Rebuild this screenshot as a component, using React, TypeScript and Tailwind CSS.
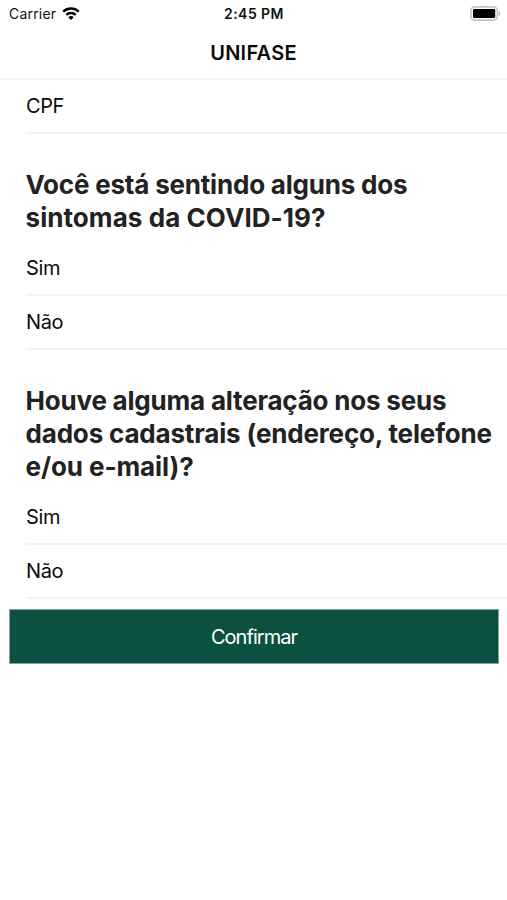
import type { ReactNode } from 'react'

type Question = {
  id: string
  lines: { text: string; tracking: string }[]
  options: string[]
}

const QUESTIONS: Question[] = [
  {
    id: 'symptoms',
    lines: [
      { text: 'Você está sentindo alguns dos', tracking: 'tracking-[-0.2px]' },
      { text: 'sintomas da COVID-19?', tracking: 'tracking-[0.07px]' },
    ],
    options: ['Sim', 'Não'],
  },
  {
    id: 'registration',
    lines: [
      { text: 'Houve alguma alteração nos seus', tracking: 'tracking-[-0.2px]' },
      { text: 'dados cadastrais (endereço, telefone', tracking: 'tracking-[-0.17px]' },
      { text: 'e/ou e-mail)?', tracking: 'tracking-[-0.08px]' },
    ],
    options: ['Sim', 'Não'],
  },
]

function WifiIcon() {
  return (
    <svg width="18" height="14" viewBox="0 0 19 15" fill="none" stroke="#000" strokeWidth="2.6">
      <path d="M1.2 5a12 12 0 0 1 16.6 0" />
      <path d="M4.4 8.4a7.4 7.4 0 0 1 10.2 0" />
      <path d="M9.5 14L6.6 11a4.2 4.2 0 0 1 5.8 0z" fill="#000" stroke="none" />
    </svg>
  )
}

function BatteryIcon() {
  return (
    <svg width="31" height="15" viewBox="0 0 31 15" fill="none">
      <rect x="0.9" y="0.9" width="26.4" height="13.2" rx="3.6" stroke="#c4c4c4" strokeWidth="1.6" />
      <rect x="3" y="3" width="22.2" height="9" rx="1.2" fill="#000" />
      <path d="M28.6 5c2.2.8 2.2 4.2 0 5z" fill="#b4b4b4" />
    </svg>
  )
}

function StatusBar() {
  return (
    <div className="grid grid-cols-3 items-center h-[27px] pl-[9px] pr-[6px] text-[#111]">
      <div className="flex items-center gap-1.5">
        <span className="text-[14px] tracking-[0.2px]">Carrier</span>
        <WifiIcon />
      </div>
      <span className="-ml-[2px] text-center text-[14px] font-semibold tracking-[0.45px]">2:45 PM</span>
      <div className="flex justify-end">
        <BatteryIcon />
      </div>
    </div>
  )
}

function Row({ children }: { children: ReactNode }) {
  return (
    <div className="ml-[26px] h-[54px] flex items-center border-b-2 border-[#f2f2f2] text-[20px] tracking-[-0.4px] text-[#0a0a0a]">
      {children}
    </div>
  )
}

export default function App() {
  return (
    <div className="min-h-screen bg-white font-['Inter','Liberation_Sans',sans-serif]">
      <StatusBar />
      <header className="h-[53px] flex items-center justify-center border-b-2 border-[#f4f4f4]">
        <h1 className="text-[20px] font-semibold tracking-[0.25px] text-[#0a0a0a]">UNIFASE</h1>
      </header>

      <main>
        <Row>CPF</Row>
        {QUESTIONS.map((q) => (
          <section key={q.id}>
            <h2 className="pt-[34px] pb-2 pl-[25.5px] text-[26px] leading-[33px] font-bold text-[#222]">
              {q.lines.map((line) => (
                <span key={line.text} className={`block whitespace-nowrap ${line.tracking}`}>
                  {line.text}
                </span>
              ))}
            </h2>
            {q.options.map((option) => (
              <Row key={option}>{option}</Row>
            ))}
          </section>
        ))}
        <div className="pt-2.5 pl-[9px] pr-2">
          <button
            type="button"
            className="block w-full h-[55px] bg-[#0c5041] border border-[#7ea59c] text-[20px] tracking-[-0.95px] text-white"
          >
            Confirmar
          </button>
        </div>
      </main>
    </div>
  )
}
